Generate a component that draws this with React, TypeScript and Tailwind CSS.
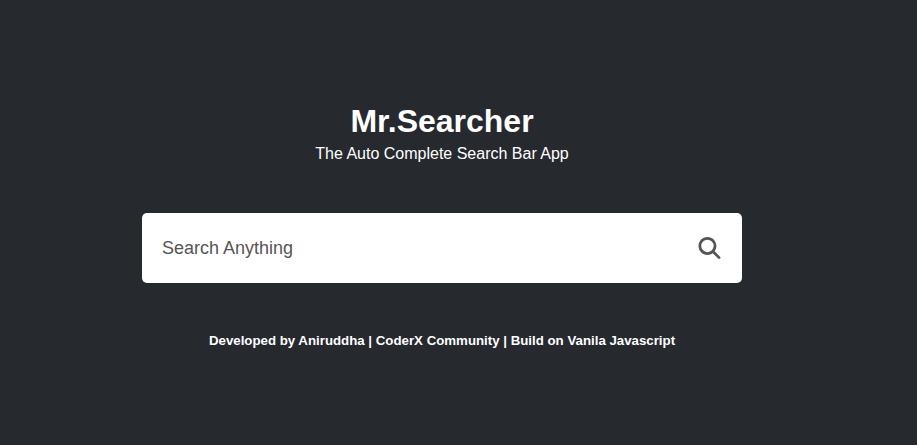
import { FaMagnifyingGlass } from "react-icons/fa6";

export default function App() {
  return (
    <div className="flex h-[445px] w-[917px] flex-col items-center overflow-hidden bg-[#26292e] pr-[33px] pt-[103px] font-['Liberation_Sans',Arial,sans-serif] text-white">
      <h1 className="text-[32px] font-bold leading-[37px]">Mr.Searcher</h1>
      <p className="mt-[5px] text-base leading-[18px]">The Auto Complete Search Bar App</p>
      <div className="mt-[50px] flex h-[70px] w-[600px] items-center justify-between rounded-[5px] bg-white pl-5 pr-[21px]">
        <input
          type="text"
          placeholder="Search Anything"
          className="min-w-0 flex-1 text-[18px] text-[#555555] outline-none placeholder:text-[#555555]"
        />
        <button type="button" aria-label="Search" className="pb-px">
          <FaMagnifyingGlass className="h-[22px] w-[23px] text-[#555555]" />
        </button>
      </div>
      <p className="mt-[50px] text-[13.28px] font-bold leading-[15px]">
        Developed by Aniruddha | CoderX Community | Build on Vanila Javascript
      </p>
    </div>
  );
}
